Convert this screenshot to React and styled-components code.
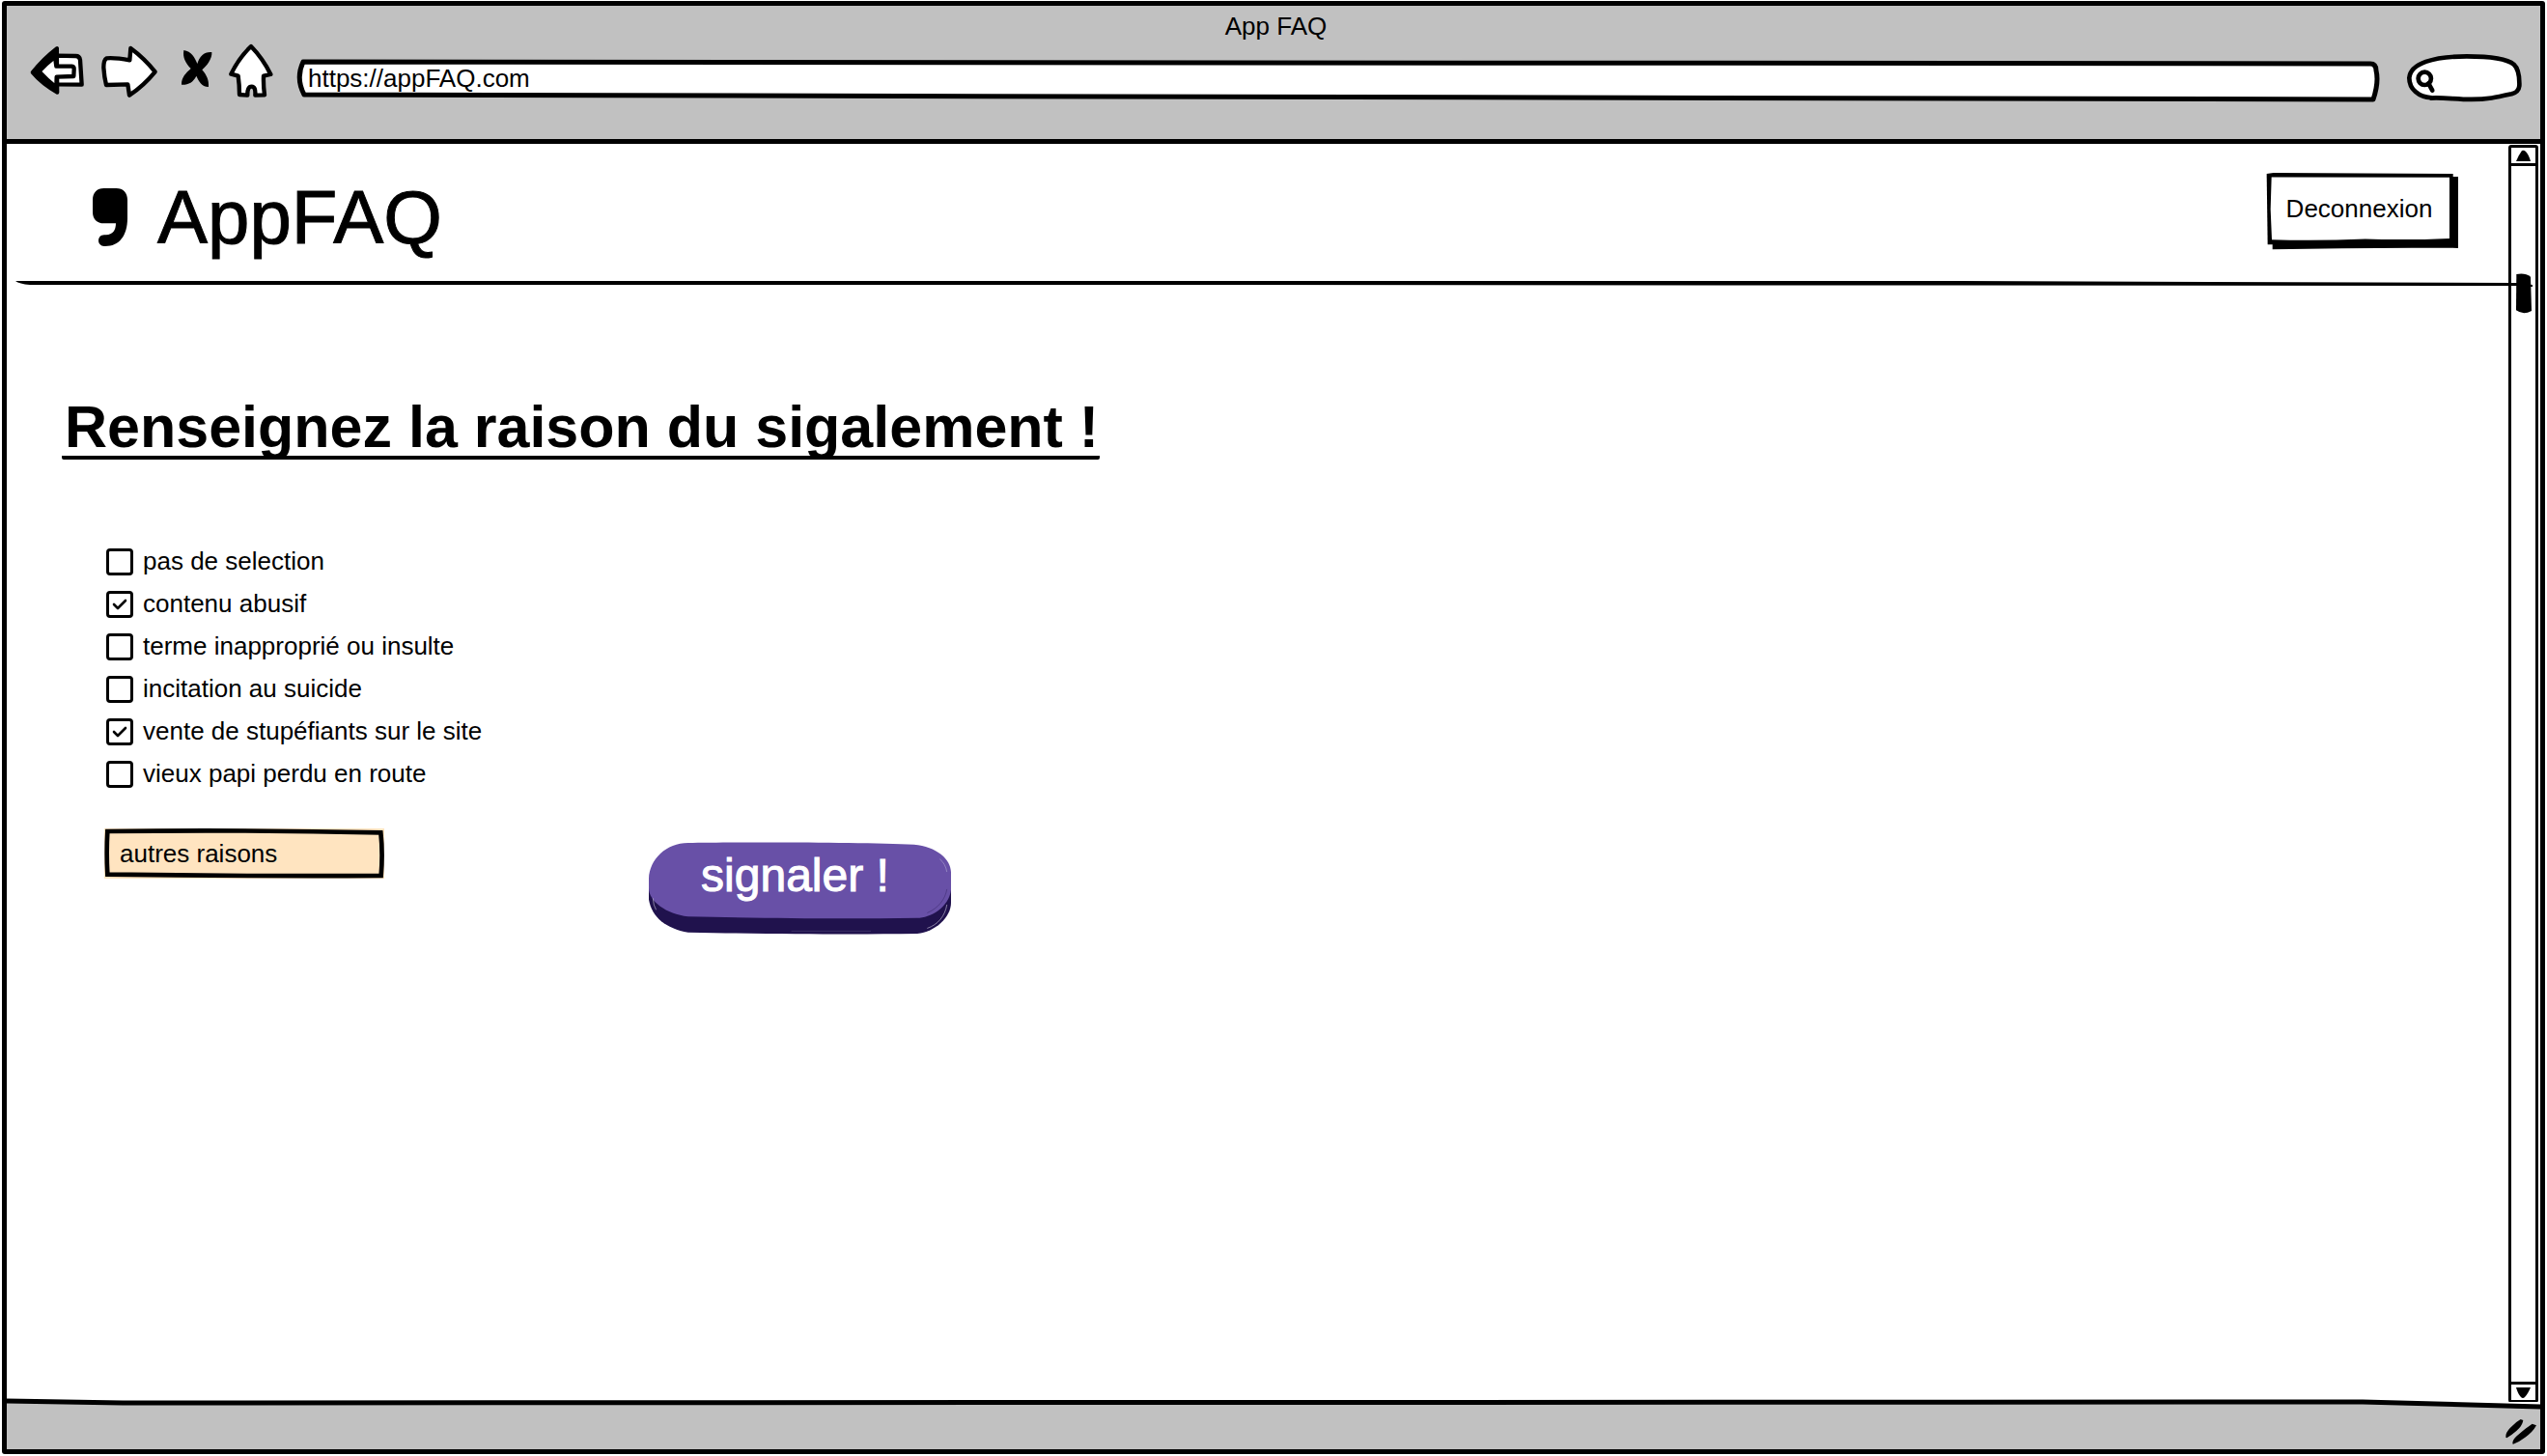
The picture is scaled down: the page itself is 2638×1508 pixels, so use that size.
import React from "react";
import styled, { createGlobalStyle } from "styled-components";

const INK = "#000000";
const CHROME = "#c1c1c1";
const PURPLE = "#6850a7";
const PURPLE_DARK = "#20124d";
const CREAM = "#ffe4c0";

const GlobalStyle = createGlobalStyle`
  *, *::before, *::after { box-sizing: border-box; }
  body {
    margin: 0;
    background: #ffffff;
    color: ${INK};
    font-family: "Liberation Sans", Arial, sans-serif;
    font-size: 26px;
  }
  button, input { font: inherit; color: inherit; }
`;

const Page = styled.div`
  display: flex;
  min-height: 100vh;
  padding: 1px 2px 2px;
`;

const Window = styled.div`
  flex: 1;
  display: flex;
  flex-direction: column;
  border: 5px solid ${INK};
  border-radius: 3px;
  background: #ffffff;
`;

const Chrome = styled.header`
  display: flex;
  flex-direction: column;
  gap: 4px;
  padding: 6px 19px 38px 24px;
  background: ${CHROME};
  border-bottom: 5px solid ${INK};
`;

const WindowTitle = styled.div`
  line-height: 30px;
  text-align: center;
`;

const NavRow = styled.div`
  display: flex;
  align-items: flex-end;
  height: 60px;
`;

const NavButtons = styled.nav`
  display: flex;
  gap: 18px;
  align-self: flex-start;
  margin-right: 24px;
`;

const BareButton = styled.button`
  display: flex;
  padding: 0;
  border: 0;
  background: none;
  cursor: pointer;
`;

const Drawing = styled.svg`
  display: block;
  overflow: visible;
  stroke-linejoin: round;
  stroke-linecap: round;
`;

const Outline = styled(Drawing)`
  position: absolute;
  inset: 0;
  width: 100%;
  height: 100%;
  pointer-events: none;
`;

const Field = styled.div`
  position: relative;
  flex: ${(p) => (p.$grow ? "1" : "none")};
  width: ${(p) => p.$width || "auto"};
  height: ${(p) => p.$height};
`;

const FieldInput = styled.input`
  position: relative;
  display: block;
  width: 100%;
  height: 100%;
  padding: ${(p) => p.$padding};
  border: 0;
  outline: 0;
  background: transparent;
`;

const SearchSlot = styled.div`
  margin-left: 29px;
`;

const Body = styled.div`
  flex: 1;
  display: flex;
`;

const Site = styled.div`
  flex: 1;
  display: flex;
  flex-direction: column;
`;

const SiteHeader = styled.header`
  position: relative;
  display: flex;
  align-items: flex-start;
  justify-content: space-between;
  padding: 30px 52px 20px 89px;
`;

const Divider = styled(Drawing)`
  position: absolute;
  z-index: 1;
  left: 9px;
  top: 100%;
  width: calc(100% + 16px);
  height: 6px;
`;

const Brand = styled.div`
  display: flex;
  align-items: center;
  gap: 31px;
  font-size: 78px;
  line-height: 92px;
  -webkit-text-stroke: 1px currentColor;
`;

const LogoutButton = styled.button`
  position: relative;
  width: 199px;
  height: 79px;
  padding: 0 6px 4px 0;
  border: 0;
  background: none;
  cursor: pointer;
`;

const ButtonText = styled.span`
  position: relative;
`;

const Content = styled.main`
  flex: 1;
  padding: 121px 57px 40px;
`;

const Heading = styled.h1`
  width: fit-content;
  margin: 0;
  padding: 0 1px 0 3px;
  border-bottom: 4px solid ${INK};
  border-radius: 2px;
  font-size: 61px;
  line-height: 60px;
  font-weight: 700;
`;

const Reasons = styled.fieldset`
  display: flex;
  flex-direction: column;
  gap: 16px;
  margin: 92px 0 42px 46px;
  padding: 0;
  border: 0;
`;

const Reason = styled.label`
  display: flex;
  align-items: flex-start;
  gap: 10px;
  width: fit-content;
  height: 28px;
  line-height: 26px;
`;

const TickBox = styled.span`
  display: grid;
  width: 28px;
  height: 28px;
`;

const TickInput = styled.input`
  grid-area: 1 / 1;
  appearance: none;
  width: 28px;
  height: 28px;
  margin: 0;
  border: 3px solid ${INK};
  border-radius: 4px;
  background: #ffffff;

  &:checked + svg { visibility: visible; }
`;

const TickMark = styled(Drawing)`
  grid-area: 1 / 1;
  visibility: hidden;
  pointer-events: none;
`;

const Actions = styled.div`
  display: flex;
  align-items: flex-start;
  gap: 274px;
  margin-left: 44px;
`;

const ReportButton = styled.button`
  position: relative;
  width: 313px;
  height: 96px;
  margin-top: 14px;
  padding: 7px 10px 33px 0;
  border: 0;
  background: none;
  color: #ffffff;
  font-size: 48px;
  line-height: 56px;
  -webkit-text-stroke: 1px currentColor;
  cursor: pointer;
`;

const Scrollbar = styled.div`
  display: flex;
  flex-direction: column;
  width: 31px;
  margin: 1px 2px 0 0;
  border: 3px solid ${INK};
  border-radius: 3px;
`;

const ScrollButton = styled(BareButton)`
  justify-content: center;
  align-items: center;
  height: 19px;
  border-bottom: ${(p) => (p.$up ? `3px solid ${INK}` : "0")};
  border-top: ${(p) => (p.$up ? "0" : `3px solid ${INK}`)};
`;

const Track = styled.div`
  flex: 1;
  display: flex;
  justify-content: center;
  padding-top: 111px;
`;

const StatusBar = styled.footer`
  position: relative;
  display: flex;
  justify-content: flex-end;
  height: 48px;
  padding: 16px 4px 0;
  background: ${CHROME};
`;

const StatusEdge = styled(Drawing)`
  position: absolute;
  left: 0;
  top: -4px;
  width: 100%;
  height: 12px;
`;

const NAV_ICONS = [
  {
    label: "Retour",
    width: 56,
    box: "18 18 168 168",
    art: (
      <>
        <path d="M100 53 L158 54 Q172 53 174 66 L179 143 L102 142 Z" fill="#fff" stroke={INK} strokeWidth="13" />
        <path d="M26 105 Q60 62 102 30 L103 167 Q55 140 26 105 Z" fill={INK} stroke={INK} strokeWidth="12" />
        <path d="M46 102 Q70 76 96 56 L100 86 H148 Q156 87 155 96 L154 117 L101 119 L100 152 Q70 128 46 102 Z" fill="#fff" stroke={INK} strokeWidth="13" />
      </>
    ),
  },
  {
    label: "Suivant",
    width: 64,
    box: "240 18 192 168",
    art: (
      <path d="M247 90 Q247 66 256 61 Q285 59 328 67 L331 30 Q372 60 407 103 Q372 146 327 176 L322 142 L255 144 Q249 120 247 90 Z" fill="#fff" stroke={INK} strokeWidth="13" />
    ),
  },
  {
    label: "Arrêter",
    width: 32,
    box: "486 18 96 168",
    art: (
      <path d="M496 36 C520 40 530 58 538 78 C545 54 560 40 583 42 C585 62 568 84 553 97 C567 113 575 130 573 150 C550 149 543 132 535 116 C525 136 510 144 489 143 C488 120 504 106 518 93 C502 76 492 60 496 36 Z" fill={INK} />
    ),
  },
  {
    label: "Accueil",
    width: 46,
    box: "636 18 138 168",
    art: (
      <path d="M705 24 Q742 62 766 111 L744 116 Q743 146 747 175 L718 176 Q720 149 707 149 Q693 149 694 176 L669 174 Q669 144 665 116 L643 110 Q667 60 705 24 Z" fill="#fff" stroke={INK} strokeWidth="13" />
    ),
  },
];

const REASONS = [
  { label: "pas de selection", checked: false },
  { label: "contenu abusif", checked: true },
  { label: "terme inapproprié ou insulte", checked: false },
  { label: "incitation au suicide", checked: false },
  { label: "vente de stupéfiants sur le site", checked: true },
  { label: "vieux papi perdu en route", checked: false },
];

function BrowserChrome() {
  return (
    <Chrome>
      <WindowTitle>App FAQ</WindowTitle>
      <NavRow>
        <NavButtons>
          {NAV_ICONS.map((icon) => (
            <BareButton key={icon.label} type="button" aria-label={icon.label}>
              <Drawing width={icon.width} height="56" viewBox={icon.box}>
                {icon.art}
              </Drawing>
            </BareButton>
          ))}
        </NavButtons>
        <Field $grow $height="45px">
          <Outline viewBox="0 0 2157 45" preserveAspectRatio="none">
            <path d="M7 3 L2148 5 Q2154 5 2154 12 Q2157 24 2151 42 L8 37 Q-1 20 7 3 Z" fill="#fff" stroke={INK} strokeWidth="5" vectorEffect="non-scaling-stroke" />
          </Outline>
          <FieldInput type="text" aria-label="Adresse" defaultValue="https://appFAQ.com" $padding="0 12px 5px" />
        </Field>
        <SearchSlot>
          <Field $width="119px" $height="50px">
            <Outline viewBox="579 171 358 150">
              <path d="M655 307 C615 305 586 280 586 245 C590 200 660 178 765 178 C830 178 890 185 912 203 C925 215 930 240 929 270 C927 288 915 292 905 295 C860 305 830 312 780 312 C730 312 690 305 652 308" fill="#fff" stroke={INK} strokeWidth="14" />
              <circle cx="634" cy="247" r="20" fill="#fff" stroke={INK} strokeWidth="14" />
              <path d="M646 262 L658 284" fill="none" stroke={INK} strokeWidth="14" />
            </Outline>
            <FieldInput type="search" aria-label="Rechercher" $padding="0 12px 0 32px" />
          </Field>
        </SearchSlot>
      </NavRow>
    </Chrome>
  );
}

function ReasonList() {
  return (
    <Reasons aria-label="Raisons">
      {REASONS.map((reason) => (
        <Reason key={reason.label}>
          <TickBox>
            <TickInput type="checkbox" defaultChecked={reason.checked} />
            <TickMark width="28" height="28" viewBox="0 0 28 28">
              <path d="M8 14 L12 18 L20 10" fill="none" stroke={INK} strokeWidth="2.6" />
            </TickMark>
          </TickBox>
          {reason.label}
        </Reason>
      ))}
    </Reasons>
  );
}

function SideScrollbar() {
  return (
    <Scrollbar>
      <ScrollButton type="button" aria-label="Défiler vers le haut" $up>
        <Drawing width="15" height="11" viewBox="0 0 15 11">
          <path d="M0 11 Q3 4 6 0 Q8 -1 10 1 Q13 4 15 11 Z" fill={INK} />
        </Drawing>
      </ScrollButton>
      <Track>
        <Drawing width="16" height="42" viewBox="918 849 48 126">
          <path d="M919 852 Q945 846 963 860 L966 966 Q940 980 918 964 Z" fill={INK} />
        </Drawing>
      </Track>
      <ScrollButton type="button" aria-label="Défiler vers le bas">
        <Drawing width="15" height="11" viewBox="0 0 15 11">
          <path d="M0 0 H15 Q12 7 9 10 Q7 12 5 10 Q2 7 0 0 Z" fill={INK} />
        </Drawing>
      </ScrollButton>
    </Scrollbar>
  );
}

export default function App() {
  return (
    <>
      <GlobalStyle />
      <Page>
        <Window>
          <BrowserChrome />
          <Body>
            <Site>
              <SiteHeader>
                <Brand>
                  <Drawing width="36" height="60" viewBox="33 47 108 180" aria-hidden="true">
                    <path d="M68 47 H106 C128 47 141 61 141 82 V140 C141 195 115 227 72 227 H69 C45 227 45 192 69 192 H75 C95 191 105 178 105 156 H68 C46 156 33 142 33 121 V82 C33 61 46 47 68 47 Z" fill={INK} />
                  </Drawing>
                  AppFAQ
                </Brand>
                <LogoutButton type="button">
                  <Outline viewBox="142 537 596 236">
                    <path d="M162 549 H738 V770 Q450 768 162 774 Z" fill={INK} />
                    <path d="M144 540 L165 537 L722 540 V756 L147 759 Z" fill={INK} />
                    <path d="M159 550 L711 551 V740 Q580 746 450 742 Q300 748 160 744 L156 650 Z" fill="#fff" />
                  </Outline>
                  <ButtonText>Deconnexion</ButtonText>
                </LogoutButton>
                <Divider viewBox="0 0 2607 6" preserveAspectRatio="none">
                  <path d="M0 0 L30 0 L2000 0 L2590 2 L2607 4 V6 L2590 5 L1200 4 L15 4 Q4 3 0 0 Z" fill={INK} />
                </Divider>
              </SiteHeader>
              <Content>
                <Heading>Renseignez la raison du sigalement !</Heading>
                <ReasonList />
                <Actions>
                  <Field $width="290px" $height="52px">
                    <Outline viewBox="144 114 870 156" preserveAspectRatio="none">
                      <path d="M144 114 H1014 V270 H144 Z" fill={CREAM} />
                      <path d="M154 123 Q580 118 1003 127 Q1010 190 1004 261 Q580 263 154 257 Q150 190 154 123 Z" fill="none" stroke={INK} strokeWidth="14" strokeLinejoin="miter" />
                    </Outline>
                    <FieldInput type="text" aria-label="Autres raisons" defaultValue="autres raisons" $padding="0 16px" />
                  </Field>
                  <ReportButton type="button">
                    <Outline viewBox="36 36 939 288">
                      <path d="M36 175 V215 C45 270 90 305 158 317 C450 322 650 324 870 321 C925 316 975 270 975 225 V170 Z" fill={PURPLE_DARK} />
                      <path d="M158 39 C300 36 700 36 860 44 C930 50 975 90 975 130 V185 C968 240 910 272 870 272 C650 276 450 274 158 268 C90 260 36 220 36 180 V150 C38 90 90 39 158 39 Z" fill={PURPLE} />
                      <path d="M902 304 C935 293 957 265 962 232" fill="none" stroke="#b9b4cc" strokeWidth="2" />
                      <path d="M902 256 C935 242 957 215 962 184" fill="none" stroke={PURPLE_DARK} strokeWidth="1" />
                      <path d="M941 90 Q958 104 962 128" fill="none" stroke="#a79bcb" strokeWidth="2" />
                      <path d="M49 212 Q50 234 58 246" fill="none" stroke="#b9b4cc" strokeWidth="2" />
                      <path d="M480 313 H725" fill="none" stroke="#6f6690" strokeWidth="1" />
                    </Outline>
                    <ButtonText>signaler !</ButtonText>
                  </ReportButton>
                </Actions>
              </Content>
            </Site>
            <SideScrollbar />
          </Body>
          <StatusBar>
            <StatusEdge viewBox="0 0 2624 12" preserveAspectRatio="none">
              <path d="M2440 3 H2624 V8 Z" fill="#fff" />
              <path d="M0 2 L120 4 L2440 3 L2624 8" fill="none" stroke={INK} strokeWidth="5" />
            </StatusEdge>
            <Drawing width="32" height="28" viewBox="584 268 96 82" aria-hidden="true">
              <path d="M585 326 Q583 312 599 296 Q616 278 631 270 L639 273 Q636 291 618 306 Q602 320 588 328 Z" fill={INK} />
              <path d="M606 346 Q604 335 620 321 Q645 298 667 284 L680 289 Q668 311 645 326 Q627 340 608 347 Z" fill={INK} />
            </Drawing>
          </StatusBar>
        </Window>
      </Page>
    </>
  );
}
